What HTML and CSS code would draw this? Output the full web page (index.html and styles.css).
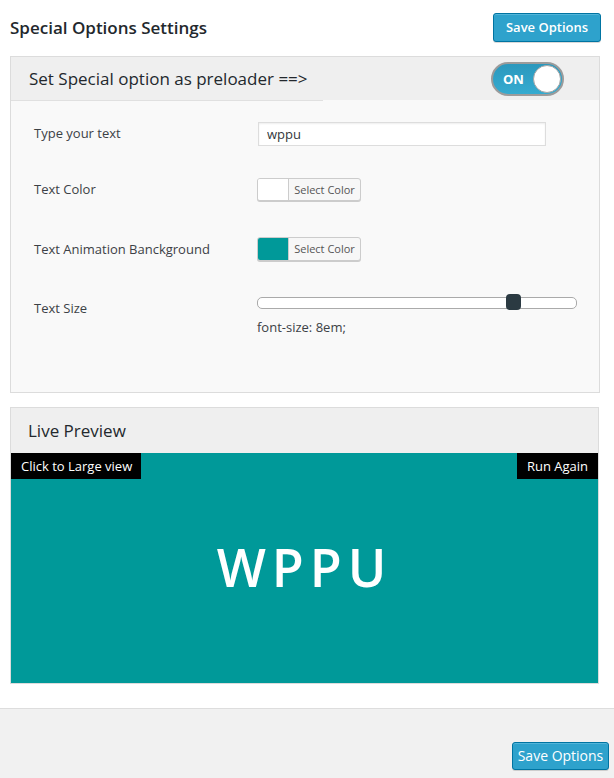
FILE: index.html
```html
<!DOCTYPE html>
<html>
<head>
<meta charset="utf-8">
<link rel="stylesheet" href="styles.css">
</head>
<body>
<div class="wrap">
  <div class="topbar">
    <h2 class="title">Special Options Settings</h2>
    <button class="btn btn-primary btn-top">Save Options</button>
  </div>

  <div class="panel">
    <div class="panel-head">
      <h3 class="panel-title">Set Special option as preloader ==&gt;</h3>
      <div class="toggle"><span class="toggle-label">ON</span><span class="knob"></span></div>
    </div>
    <div class="panel-line"></div>
    <div class="panel-body">
      <div class="row row-1">
        <div class="label">Type your text</div>
        <input class="text-input" type="text" value="wppu">
      </div>
      <div class="row row-2">
        <div class="label">Text Color</div>
        <div class="color-btn"><span class="swatch swatch-white"></span><span class="color-text">Select Color</span></div>
      </div>
      <div class="row row-3">
        <div class="label">Text Animation Banckground</div>
        <div class="color-btn"><span class="swatch swatch-teal"></span><span class="color-text">Select Color</span></div>
      </div>
      <div class="row row-4">
        <div class="label label-size">Text Size</div>
        <div class="size-ctl">
          <div class="slider"><div class="track"></div><div class="handle"></div></div>
          <div class="size-note">font-size: 8em;</div>
        </div>
      </div>
    </div>
  </div>

  <div class="panel panel-preview">
    <div class="preview-head">
      <h3 class="panel-title">Live Preview</h3>
    </div>
    <div class="preview">
      <span class="tag tag-left">Click to Large view</span>
      <span class="tag tag-right">Run Again</span>
      <div class="preview-text">WPPU</div>
    </div>
  </div>
</div>
<div class="footer">
  <button class="btn btn-primary btn-foot">Save Options</button>
</div>
</body>
</html>
```

FILE: styles.css
```css
html, body {
  margin: 0;
  padding: 0;
  background: #ffffff;
  font-family: "Open Sans", "Noto Sans", sans-serif;
  color: #32373c;
}

.wrap {
  padding: 0 14px 24px 10px;
}

.topbar {
  display: flex;
  justify-content: space-between;
  align-items: center;
  padding-top: 13px;
  margin-bottom: 15px;
  height: 28px;
}

.title {
  margin: 0;
  font-size: 17px;
  font-weight: 600;
  color: #23282d;
}

.btn {
  font-family: "Open Sans", "Noto Sans", sans-serif;
  cursor: pointer;
  white-space: nowrap;
}

.btn-primary {
  background: #2ea2cc;
  border: 1px solid #0074a2;
  border-radius: 3px;
  color: #ffffff;
  box-shadow: inset 0 1px 0 rgba(120, 200, 230, 0.5), 0 1px 0 rgba(0, 0, 0, 0.15);
  padding: 0;
  height: 28px;
  line-height: 26px;
  font-size: 13px;
}

.btn-top {
  width: 108px;
  height: 29px;
  font-weight: 600;
  margin-right: -1px;
}

.panel {
  border: 1px solid #dcdcdc;
  background: #f9f9f9;
}

.panel-head {
  height: 43px;
  background: #efefef;
  display: flex;
  align-items: center;
  justify-content: space-between;
  padding: 0 35px 0 18px;
}

.panel-title {
  margin: 0;
  font-size: 17px;
  font-weight: 400;
  color: #23282d;
}

.panel-line {
  width: 312px;
  height: 1px;
  background: #e0e0e0;
}

.toggle {
  position: relative;
  width: 69px;
  height: 30px;
  border: 2px solid #9b9b9b;
  border-radius: 17px;
  background: linear-gradient(#2b98bd, #35abd0);
  display: flex;
  align-items: center;
}

.toggle-label {
  color: #ffffff;
  font-size: 13px;
  font-weight: 700;
  margin-left: 10px;
  font-family: "Open Sans", sans-serif;
}

.knob {
  position: absolute;
  right: 1px;
  top: 1px;
  width: 26px;
  height: 26px;
  border-radius: 50%;
  background: #ffffff;
  border: 1px solid #a5a5a5;
}

.panel-body {
  box-sizing: border-box;
  height: 291px;
  padding: 21px 0 0 23px;
}

.row {
  display: flex;
  align-items: center;
}

.label {
  width: 224px;
  font-size: 13px;
  line-height: 18px;
  color: #3c4146;
  margin-top: -3px;
}

.row-2 .label,
.row-3 .label { margin-top: -1px; }

.row-2 { margin-top: 32px; }
.row-3 { margin-top: 36px; }
.row-4 { margin-top: 33px; align-items: flex-start; }

.row-4 .label-size { margin-top: 5px; }

.text-input {
  box-sizing: border-box;
  width: 288px;
  height: 24px;
  margin: 0;
  border: 1px solid #dddddd;
  background: #ffffff;
  box-shadow: inset 0 1px 2px rgba(0, 0, 0, 0.07);
  padding: 0 8px;
  font-family: "Open Sans", sans-serif;
  font-size: 13px;
  color: #32373c;
  outline: none;
}

.color-btn {
  box-sizing: border-box;
  width: 104px;
  height: 23px;
  border: 1px solid #cccccc;
  border-radius: 3px;
  background: #f7f7f7;
  box-shadow: 0 1px 0 #cccccc;
  display: flex;
  overflow: hidden;
  margin-left: -1px;
}

.row-3 .color-btn { height: 24px; }

.swatch {
  width: 30px;
  height: 100%;
  border-right: 1px solid #cccccc;
}

.swatch-white { background: #ffffff; }
.swatch-teal { background: #009999; }

.color-text {
  flex: 1;
  text-align: center;
  font-size: 11px;
  line-height: 21px;
  color: #555555;
}

.size-ctl {
  display: flex;
  flex-direction: column;
}

.slider {
  position: relative;
  width: 320px;
  height: 16px;
  margin-left: -1px;
}

.track {
  position: absolute;
  left: 0;
  right: 0;
  top: 3px;
  height: 12px;
  box-sizing: border-box;
  border: 1px solid #aaaaaa;
  border-radius: 5px;
  background: #ffffff;
}

.handle {
  position: absolute;
  left: 249px;
  top: 0;
  width: 15px;
  height: 16px;
  border-radius: 4px;
  background: #2b3a42;
}

.size-note {
  margin-top: 8px;
  font-size: 13px;
  line-height: 18px;
  color: #3c4146;
  margin-left: -1px;
}

.panel-preview {
  margin-top: 14px;
  margin-right: 1px;
  background: #efefef;
}

.preview-head {
  height: 45px;
  display: flex;
  align-items: center;
  padding-left: 17px;
}

.preview {
  position: relative;
  height: 230px;
  background: #009999;
  display: flex;
  align-items: center;
  justify-content: center;
}

.tag {
  position: absolute;
  top: 0;
  background: #000000;
  color: #ffffff;
  font-size: 13px;
  line-height: 26px;
  padding: 0 10px;
}

.tag-left { left: 0; padding-right: 9px; }
.tag-right { right: 0; }

.preview-text {
  color: #ffffff;
  font-size: 52px;
  font-weight: 600;
  letter-spacing: 6px;
  line-height: 1;
  margin-top: -2px;
}

.footer {
  border-top: 1px solid #dddddd;
  background: #f1f1f1;
  height: 80px;
  display: flex;
  justify-content: flex-end;
  align-items: flex-start;
  padding: 33px 5px 0 0;
  box-sizing: border-box;
}

.btn-foot {
  width: 97px;
  height: 28px;
  font-size: 14px;
}
```
